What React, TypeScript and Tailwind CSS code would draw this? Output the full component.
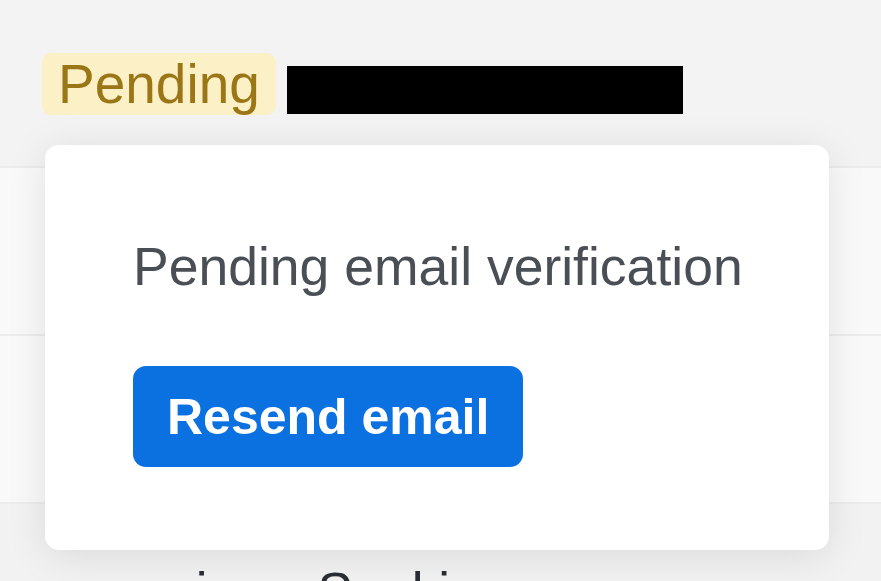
import React from 'react';

const rows = ['', ''];

export default function App() {
  return (
    <div className="relative h-[581px] w-[881px] overflow-hidden bg-[#f9f9f9] font-['Liberation_Sans',Arial,sans-serif]">
      {/* header row with status badge */}
      <div className="flex h-[168px] items-start gap-[11px] border-b-2 border-[#ececec] bg-[#f3f3f3] pl-[42px] pt-[53px]">
        <span className="flex h-[62px] items-center rounded-[9px] bg-[#fcf0c6] px-[16px] text-[55px] leading-none text-[#9b7616]">
          Pending
        </span>
        <div className="mt-[13px] h-[48px] w-[396px] bg-black" />
      </div>

      {rows.map((_, i) => (
        <div key={i} className="h-[168px] border-b-2 border-[#ececec]" />
      ))}

      <div className="bg-[#f2f2f2] pl-[178px] pt-[58px] text-[53px] leading-[60px] text-[#2a2e33]">
        <span>ri</span>
        <span className="ml-[110px]">Sunkin</span>
      </div>

      {/* popover */}
      <div className="absolute left-[45px] top-[145px] flex h-[405px] w-[784px] flex-col items-start rounded-[14px] bg-white pl-[88px] pt-[92px] shadow-[0_6px_40px_rgba(0,0,0,0.10)]">
        <p className="text-[53.5px] leading-[60px] text-[#4a4f56]">Pending email verification</p>
        <button className="mt-[69px] flex h-[101px] items-center rounded-[13px] bg-[#0c71e0] px-[34px] text-[50px] font-bold leading-none text-white">
          Resend email
        </button>
      </div>
    </div>
  );
}
